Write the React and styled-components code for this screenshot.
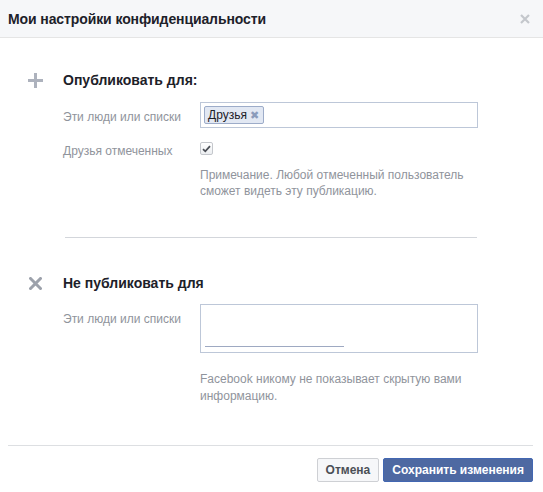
import React from "react";
import styled, { createGlobalStyle } from "styled-components";

const Global = createGlobalStyle`
  html, body { margin: 0; padding: 0; background: #fff; }
  body { font-family: "Liberation Sans", Arial, sans-serif; -webkit-font-smoothing: antialiased; }
  * { box-sizing: border-box; }
`;

const Dialog = styled.div`
  width: 543px;
  display: flex;
  flex-direction: column;
`;

const Header = styled.div`
  height: 38px;
  background: #f6f7f9;
  border-bottom: 1px solid #e5e5e5;
  display: flex;
  align-items: center;
  justify-content: space-between;
  padding: 0 13px 0 8px;
`;

const Title = styled.h2`
  margin: 0;
  font-size: 14px;
  font-weight: bold;
  color: #1d2129;
  line-height: 18px;
  letter-spacing: -0.1px;
`;

const Close = styled.button`
  border: 0;
  background: none;
  padding: 0;
  width: 10px;
  height: 10px;
  display: flex;
  cursor: pointer;
`;

const Body = styled.div`
  padding: 33px 0 0 28px;
  display: flex;
  flex-direction: column;
`;

const Section = styled.section`
  display: grid;
  grid-template-columns: 35px 1fr;
`;

const IconCell = styled.div`
  height: 18px;
  width: 15px;
  display: flex;
  align-items: center;
  justify-content: center;
`;

const Content = styled.div`
  display: flex;
  flex-direction: column;
`;

const Heading = styled.h3`
  margin: 0 0 ${(p) => p.$gap}px;
  font-size: 14px;
  line-height: 18px;
  font-weight: bold;
  color: #1d2129;
`;

const Row = styled.div`
  display: grid;
  grid-template-columns: 137px 278px;
  margin-top: ${(p) => p.$top || 0}px;
`;

const Label = styled.div`
  font-size: 12px;
  line-height: 16px;
  color: #90949c;
  padding-top: ${(p) => p.$pad}px;
`;

const Field = styled.div`
  display: flex;
  flex-direction: column;
`;

const TokenInput = styled.div`
  height: ${(p) => p.$h}px;
  border: 1px solid #bdc7d8;
  padding: 3px;
  display: flex;
  flex-direction: column;
  justify-content: ${(p) => (p.$empty ? "flex-end" : "flex-start")};
`;

const Token = styled.span`
  align-self: flex-start;
  height: 19px;
  display: inline-flex;
  align-items: center;
  gap: 3px;
  padding: 0 4px 0 3px;
  background: #e2e8f3;
  border: 1px solid #9dacc9;
  border-radius: 2px;
  font-size: 12px;
  color: #1d2129;
`;

const TokenX = styled.span`
  font-size: 11px;
  color: #8b9bbb;
  line-height: 1;
`;

const TypeLine = styled.div`
  width: 139px;
  height: 1px;
  margin: 0 0 2px 1px;
  background: #9ea9c2;
`;

const Check = styled.span`
  width: 13px;
  height: 13px;
  margin-top: 1px;
  border: 1px solid #c4c7cc;
  border-radius: 2px;
  background: linear-gradient(#fff, #eceef1);
  display: flex;
  align-items: center;
  justify-content: center;
`;

const Note = styled.p`
  margin: ${(p) => p.$top}px 0 0;
  font-size: 12px;
  line-height: ${(p) => p.$lh || 16}px;
  color: #90949c;
  width: 290px;
`;

const Divider = styled.hr`
  border: 0;
  border-top: 1px solid #d3d6db;
  margin: 38px 0 36px 37px;
  width: 412px;
`;

const Footer = styled.div`
  margin: 40px 10px 0 8px;
  border-top: 1px solid #dddfe2;
  padding-top: 12px;
  display: flex;
  justify-content: flex-end;
  gap: 4px;
`;

const Button = styled.button`
  height: 24px;
  padding: 0 8px;
  font-family: "Liberation Sans", Arial, sans-serif;
  font-size: 12px;
  font-weight: bold;
  border-radius: 2px;
  border: 1px solid ${(p) => (p.$primary ? "#4267b2" : "#ced0d4")};
  background: ${(p) => (p.$primary ? "#4e69a2" : "#f6f7f9")};
  color: ${(p) => (p.$primary ? "#fff" : "#4b4f56")};
  cursor: pointer;
`;

const PlusIcon = () => (
  <svg width="15" height="15" viewBox="0 0 15 15">
    <rect x="0" y="6" width="15" height="3" fill="#adb2bd" />
    <rect x="6" y="0" width="3" height="15" fill="#adb2bd" />
  </svg>
);

const CrossIcon = () => (
  <svg width="13" height="13" viewBox="0 0 13 13">
    <path d="M1.5 1.5 L11.5 11.5 M11.5 1.5 L1.5 11.5" stroke="#9ca1ab" strokeWidth="3" strokeLinecap="square" />
  </svg>
);

export default function App() {
  return (
    <Dialog>
      <Global />
      <Header>
        <Title>Мои настройки конфиденциальности</Title>
        <Close aria-label="Закрыть">
          <svg width="10" height="10" viewBox="0 0 10 10">
            <path d="M1 1 L9 9 M9 1 L1 9" stroke="#c4c7cc" strokeWidth="2.2" />
          </svg>
        </Close>
      </Header>
      <Body>
        <Section>
          <IconCell>
            <PlusIcon />
          </IconCell>
          <Content>
            <Heading $gap={13}>Опубликовать для:</Heading>
            <Row>
              <Label $pad={7}>Эти люди или списки</Label>
              <Field>
                <TokenInput $h={26}>
                  <Token>
                    Друзья<TokenX>✖</TokenX>
                  </Token>
                </TokenInput>
              </Field>
            </Row>
            <Row $top={13}>
              <Label $pad={2}>Друзья отмеченных</Label>
              <Field>
                <Check>
                  <svg width="9" height="8" viewBox="0 0 9 8">
                    <path d="M1 4.2 L3.3 6.3 L8 1.2" stroke="#4b4f56" strokeWidth="1.8" fill="none" />
                  </svg>
                </Check>
                <Note $top={12}>
                  Примечание. Любой отмеченный пользователь сможет видеть эту публикацию.
                </Note>
              </Field>
            </Row>
          </Content>
        </Section>
        <Divider />
        <Section>
          <IconCell>
            <CrossIcon />
          </IconCell>
          <Content>
            <Heading $gap={12}>Не публиковать для</Heading>
            <Row>
              <Label $pad={7}>Эти люди или списки</Label>
              <Field>
                <TokenInput $h={49} $empty>
                  <TypeLine />
                </TokenInput>
                <Note $top={18} $lh={17}>
                  Facebook никому не показывает скрытую вами информацию.
                </Note>
              </Field>
            </Row>
          </Content>
        </Section>
      </Body>
      <Footer>
        <Button>Отмена</Button>
        <Button $primary>Сохранить изменения</Button>
      </Footer>
    </Dialog>
  );
}
